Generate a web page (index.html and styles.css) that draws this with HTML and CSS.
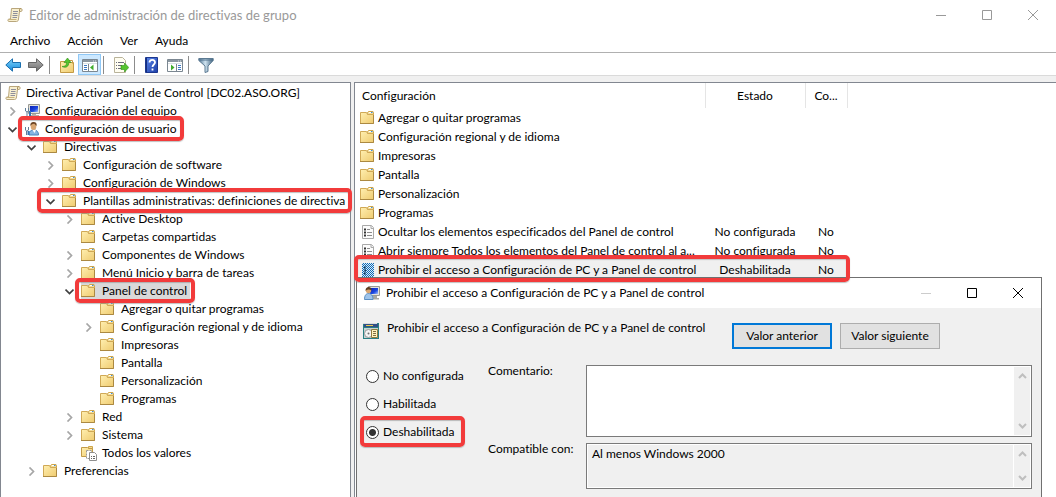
FILE: index.html
```html
<!DOCTYPE html>
<html lang="es">
<head>
    <meta charset="UTF-8">
    <meta name="viewport" content="width=device-width, initial-scale=1.0">
    <title>Editor de administración de directivas de grupo</title>
    <link rel="stylesheet" href="styles.css">
</head>
<body>

<!-- Shared icons -->
<svg class="sprite" aria-hidden="true">
    <defs>
        <linearGradient id="gFolder" x1="0" y1="0" x2="1" y2="1">
            <stop offset="0" stop-color="#ffefb0"/>
            <stop offset="1" stop-color="#efcb70"/>
        </linearGradient>
        <linearGradient id="gBlue" x1="0" y1="0" x2="0" y2="1">
            <stop offset="0" stop-color="#7fd4fb"/>
            <stop offset="1" stop-color="#1389dc"/>
        </linearGradient>
        <linearGradient id="gGray" x1="0" y1="0" x2="0" y2="1">
            <stop offset="0" stop-color="#b5b5b5"/>
            <stop offset="1" stop-color="#6e6e6e"/>
        </linearGradient>
        <linearGradient id="gHelp" x1="0" y1="0" x2="1" y2="1">
            <stop offset="0" stop-color="#5b86ea"/>
            <stop offset="1" stop-color="#1e3fa8"/>
        </linearGradient>
        <linearGradient id="gScreen" x1="0" y1="0" x2="1" y2="1">
            <stop offset="0" stop-color="#0a1fb4"/>
            <stop offset="0.6" stop-color="#1c48e0"/>
            <stop offset="1" stop-color="#a9c6ff"/>
        </linearGradient>
        <linearGradient id="gFunnel" x1="0" y1="0" x2="1" y2="0">
            <stop offset="0" stop-color="#4f7594"/>
            <stop offset="0.45" stop-color="#cfe3f0"/>
            <stop offset="1" stop-color="#3f627f"/>
        </linearGradient>
        <pattern id="dither" width="2" height="2" patternUnits="userSpaceOnUse">
            <rect width="1" height="1" fill="#0f6ab4"/>
            <rect x="1" y="1" width="1" height="1" fill="#0f6ab4"/>
        </pattern>
    </defs>
    <symbol id="folder" viewBox="1 0 16 16">
        <path d="M8.500 3.500V2.500L9.500 1.500H14L14.500 2.500V5H8.500z" fill="#f3dc98" stroke="#cfa64c"/>
        <path d="M10 2.500h3" stroke="#fff"/>
        <path d="M12 2.500h1.500" stroke="#3b8fe0"/>
        <path d="M1.500 2.500H7.500L8.500 4.500H14.500V13.500H1.500z" fill="url(#gFolder)" stroke="#d0a956"/>
        <path d="M14.500 5V13.500H1" fill="none" stroke="#ab8942"/>
    </symbol>
    <symbol id="scroll" viewBox="0 0 16 16">
        <path d="M4.500 1.500H14c1.500 0 1.500 3 0 3h-1.500L11.500 12c0 1.500-.8 2.500-2 2.500H2c-1.500 0-1.500-2.500 0-2.500h1.500z" fill="#f8efcf" stroke="#b9a67c"/>
        <path d="M12.500 4.500V3c0-1 .5-1.500 1.500-1.500" fill="#e6d5a6" stroke="#a58d58"/>
        <path d="M2 12.500h7.500" stroke="#c8b27c"/>
        <path d="M6 4.500h5M6 6.500h4.500M5.500 8.500h5M5.500 10.500h4.500" stroke="#8f8f9b"/>
    </symbol>
    <symbol id="computer" viewBox="0 0 16 16">
        <path d="M4.500 1.500h11v9h-11z" fill="#e3e3dc" stroke="#9a9a94"/>
        <path d="M6 3h8v6H6z" fill="url(#gScreen)"/>
        <path d="M8 11h4v2H8zM6 12h9v2H6z" fill="#b3b3ac"/>
        <path d="M1.500 5v3l1.500 1 1.500-1V5M3 9v5" fill="none" stroke="#5f7d98"/>
        <path d="M6 8v6" stroke="#3676b5" stroke-width="2"/>
    </symbol>
    <symbol id="user" viewBox="0 0 16 16">
        <path d="M5 14c0-4 2-5 5-5s4.500 2 4.500 5z" fill="#86b5e3" stroke="#4b83bb"/>
        <path d="M8.500 9l2 3 1.500-3z" fill="#fff"/>
        <ellipse cx="9.500" cy="5.500" rx="2.800" ry="3.500" fill="#d9a672"/>
        <path d="M6.500 5c-.5-3 1-4 3.200-4s3.500 1.500 2.800 4c-1-.5-1-1.500-2-2S7.500 3.500 6.500 5z" fill="#6d4524"/>
        <path d="M1.500 6v3l1 1v4M4.500 6v3l-1.500 1" fill="none" stroke="#5f7d98"/>
        <path d="M4.500 10v4" stroke="#3676b5" stroke-width="2"/>
    </symbol>
    <symbol id="userpc" viewBox="0 0 16 16">
        <path d="M4.500 1.500h11v9h-11z" fill="#e3e3dc" stroke="#9a9a94"/>
        <path d="M6 3h8v6H6z" fill="url(#gScreen)"/>
        <path d="M9 11h4v2H9zM8 13h7v1.500H8z" fill="#a8a8a2"/>
        <path d="M.5 14.500c0-4 1.500-6 4-6s4.500 2 4.500 6z" fill="#9fc4ea" stroke="#5a8fc4"/>
        <circle cx="4.500" cy="5.500" r="2.700" fill="#d9a672"/>
        <path d="M1.500 6c0-3 1.500-4 3-4s3.500 1 3 3.500C6 4 3 4 1.500 6z" fill="#5c3c20"/>
    </symbol>
    <symbol id="doc" viewBox="0 0 16 16">
        <path d="M2.500 1.500h9l2 2v11h-11z" fill="#fcfcfc" stroke="#a9a9a9"/>
        <path d="M11 1.500v3h3" fill="#eee" stroke="#a9a9a9"/>
        <path d="M4 5.500h2M4 8.500h2M4 11.500h2" stroke="#333" stroke-width="2"/>
        <path d="M7 5.500H10M7 8.500h5M7 11.500h5" stroke="#8c8c8c"/>
    </symbol>
    <symbol id="docSelected" viewBox="0 0 16 16">
        <path d="M2 1h10l2 2v12H2z" fill="#d9eafa"/>
        <path d="M4 5.500h2M4 8.500h2M4 11.500h2" stroke="#333" stroke-width="2"/>
        <path d="M2 1h12v14H2z" fill="url(#dither)"/>
    </symbol>
    <symbol id="allValues" viewBox="0 0 16 16">
        <path d="M7.500 3V1.500h4V5h-4z" fill="#f3dc98" stroke="#cfa64c"/>
        <path d="M.5 2.500h6l1 1H11.500v8H.5z" fill="url(#gFolder)" stroke="#c29b48"/>
        <path d="M5.500 5.500h5v8h-5z" fill="#fff" stroke="#999" stroke-dasharray="2 1"/>
        <path d="M8.500 7.500h5l2 2v6h-7z" fill="#fff" stroke="#8e8e8e"/>
        <path d="M10 11.500h1M12 11.500h2M10 13.500h1M12 13.500h2" stroke="#666"/>
    </symbol>
    <symbol id="policy" viewBox="0 0 16 16">
        <path d="M0 0h16v16H0z" fill="#287f84"/>
        <path d="M1 1h14v3H1z" fill="#314f86"/>
        <path d="M0 0h14v1H0z" fill="#dcdcdc"/>
        <path d="M3 2h7v1H3z" fill="#e8c94c"/>
        <path d="M1 5h14v10H1z" fill="#c8d3d3"/>
        <circle cx="5.500" cy="10.500" r="4" fill="#f4f4f4" stroke="#999"/>
        <circle cx="5.500" cy="10.500" r="1" fill="#6c6c6c"/>
        <path d="M8.500 6.500h6v8h-6z" fill="#fff3bf" stroke="#8f7b3c"/>
        <path d="M10 8.500h3M10 10.500h3M10 12.500h3" stroke="#7e6f42"/>
    </symbol>
    <symbol id="chevronRight" viewBox="0 0 9 9">
        <path d="M2.500 0.500L6.500 4.500L2.500 8.500" fill="none" stroke="#a6a6a6" stroke-width="1.700"/>
    </symbol>
    <symbol id="chevronDown" viewBox="0 0 9 9">
        <path d="M0.500 2.500L4.500 6.500L8.500 2.500" fill="none" stroke="#404040" stroke-width="1.700"/>
    </symbol>
    <symbol id="scrollUp" viewBox="0 0 9 9">
        <path d="M1 6L4.500 2.500L8 6" fill="none" stroke="#bfbfbf" stroke-width="2"/>
    </symbol>
    <symbol id="scrollDown" viewBox="0 0 9 9">
        <path d="M1 3L4.500 6.500L8 3" fill="none" stroke="#bfbfbf" stroke-width="2"/>
    </symbol>
    <symbol id="minimize" viewBox="0 0 10 10">
        <path d="M0 5.500h10" stroke="currentColor"/>
    </symbol>
    <symbol id="maximize" viewBox="0 0 10 10">
        <path d="M.5.5h9v9h-9z" fill="none" stroke="currentColor"/>
    </symbol>
    <symbol id="close" viewBox="0 0 10 10">
        <path d="M0 0l10 10M10 0L0 10" stroke="currentColor"/>
    </symbol>
</svg>

<div class="window">
    <header class="titlebar">
        <svg class="icon"><use href="#scroll"/></svg>
        <h1>Editor de administración de directivas de grupo</h1>
        <div class="window-controls">
            <button type="button" aria-label="Minimizar"><svg><use href="#minimize"/></svg></button>
            <button type="button" aria-label="Maximizar"><svg><use href="#maximize"/></svg></button>
            <button type="button" aria-label="Cerrar"><svg><use href="#close"/></svg></button>
        </div>
    </header>

    <nav class="menubar">
        <button type="button">Archivo</button>
        <button type="button">Acción</button>
        <button type="button">Ver</button>
        <button type="button">Ayuda</button>
    </nav>

    <div class="toolbar">
        <button type="button" aria-label="Atrás">
            <svg class="icon" viewBox="0 0 16 16"><path d="M.8 8L7.500 1.800V5.500H15.500V10.500H7.500V14.200z" fill="url(#gBlue)" stroke="#1b6fae"/></svg>
        </button>
        <button type="button" aria-label="Adelante">
            <svg class="icon" viewBox="0 0 16 16"><path d="M15.200 8L8.500 1.800V5.500H.5V10.500H8.500V14.200z" fill="url(#gGray)" stroke="#666"/></svg>
        </button>
        <span class="separator"></span>
        <button type="button" aria-label="Subir un nivel">
            <svg class="icon" viewBox="0 0 16 16">
                <path d="M1.500 4.500h5l1 1H14.500V15.500h-13z" fill="url(#gFolder)" stroke="#c39a45"/>
                <path d="M9.500 3.500h4v3" fill="none" stroke="#c39a45"/>
                <path d="M3 9.500c3 0 4.500-1 4.500-4H5L8.500 1l3.500 4.500H9.800C9.800 9.500 7 11.500 3 9.500z" fill="#55c42e" stroke="#2f8f17" stroke-width=".6"/>
            </svg>
        </button>
        <button type="button" class="active" aria-label="Mostrar árbol de consola">
            <svg class="icon" viewBox="0 0 16 16">
                <path d="M.5 2.500h15v12H.5z" fill="#fff" stroke="#7b8791"/>
                <path d="M1 3h14v2H1z" fill="#8a96a0"/>
                <path d="M11 4h1M13 4h1M1 6.500h14" stroke="#d9e0e5"/>
                <path d="M6.500 7v7" stroke="#7b8791"/>
                <path d="M2 8.500h3M2 10.500h3M2 12.500h3" stroke="#3c78c4"/>
                <path d="M11.500 7.500v6L8 10.500z" fill="#41ad2c"/>
            </svg>
        </button>
        <span class="separator"></span>
        <button type="button" aria-label="Exportar lista">
            <svg class="icon" viewBox="0 0 16 16">
                <path d="M1.500.5h8l3 3v12h-11z" fill="#fffdf0" stroke="#b9b39a"/>
                <path d="M3 5.500h1M3 8.500h1M3 11.500h1M5 5.500h6M5 8.500h4M5 11.500h4" stroke="#6d6d7d"/>
                <path d="M8 8.500h3.500V6L15.800 10.500 11.500 15v-2.500H8z" fill="#55c42e" stroke="#2f8f17" stroke-width=".6"/>
            </svg>
        </button>
        <span class="separator"></span>
        <button type="button" aria-label="Ayuda">
            <svg class="icon" viewBox="0 0 16 16">
                <path d="M1.500.5h12v15h-12z" fill="url(#gHelp)" stroke="#1c378f"/>
                <path d="M2.500 1v14" stroke="#16307f"/>
                <path d="M5.500 5.500c0-3.500 5.500-3.500 5.500 0 0 2-2.500 2-2.500 4.500M8.500 11.500v2" fill="none" stroke="#fff" stroke-width="1.800"/>
            </svg>
        </button>
        <button type="button" aria-label="Mostrar panel de acciones">
            <svg class="icon" viewBox="0 0 16 16">
                <path d="M.5 2.500h15v12H.5z" fill="#fff" stroke="#7b8791"/>
                <path d="M1 3h14v2H1z" fill="#8a96a0"/>
                <path d="M11 4h1M13 4h1M1 6.500h14" stroke="#d9e0e5"/>
                <path d="M9.500 7v7" stroke="#7b8791"/>
                <path d="M11 8.500h3M11 10.500h3M11 12.500h3" stroke="#3c78c4"/>
                <path d="M4 7.500v6L7.500 10.500z" fill="#41ad2c"/>
            </svg>
        </button>
        <span class="separator"></span>
        <button type="button" aria-label="Filtro">
            <svg class="icon" viewBox="0 0 16 16">
                <path d="M.8 1.500H15.200V3.500L10 9V14.500L7 15.500V9L.8 3.500z" fill="url(#gFunnel)" stroke="#5c7a92"/>
                <path d="M1.500 3h13" stroke="#4f708c"/>
            </svg>
        </button>
    </div>

    <main class="workspace">
        <section class="pane tree-pane">
            <div class="row root"><svg class="icon"><use href="#scroll"/></svg><span>Directiva Activar Panel de Control [DC02.ASO.ORG]</span></div>
            <ul class="tree">
                <li>
                    <div class="row"><button type="button" class="toggle" aria-label="Expandir"><svg><use href="#chevronRight"/></svg></button><span class="node"><svg class="icon"><use href="#computer"/></svg>Configuración del equipo</span></div>
                </li>
                <li>
                    <div class="row"><button type="button" class="toggle" aria-label="Contraer"><svg><use href="#chevronDown"/></svg></button><span class="node marked"><svg class="icon"><use href="#user"/></svg>Configuración de usuario</span></div>
                    <ul>
                        <li>
                            <div class="row"><button type="button" class="toggle" aria-label="Contraer"><svg><use href="#chevronDown"/></svg></button><span class="node"><svg class="icon"><use href="#folder"/></svg>Directivas</span></div>
                            <ul>
                                <li>
                                    <div class="row"><button type="button" class="toggle" aria-label="Expandir"><svg><use href="#chevronRight"/></svg></button><span class="node"><svg class="icon"><use href="#folder"/></svg>Configuración de software</span></div>
                                </li>
                                <li>
                                    <div class="row"><button type="button" class="toggle" aria-label="Expandir"><svg><use href="#chevronRight"/></svg></button><span class="node"><svg class="icon"><use href="#folder"/></svg>Configuración de Windows</span></div>
                                </li>
                                <li>
                                    <div class="row marked"><button type="button" class="toggle" aria-label="Contraer"><svg><use href="#chevronDown"/></svg></button><span class="node"><svg class="icon"><use href="#folder"/></svg>Plantillas administrativas: definiciones de directiva</span></div>
                                    <ul>
                                        <li>
                                            <div class="row"><button type="button" class="toggle" aria-label="Expandir"><svg><use href="#chevronRight"/></svg></button><span class="node"><svg class="icon"><use href="#folder"/></svg>Active Desktop</span></div>
                                        </li>
                                        <li>
                                            <div class="row"><span class="toggle"></span><span class="node"><svg class="icon"><use href="#folder"/></svg>Carpetas compartidas</span></div>
                                        </li>
                                        <li>
                                            <div class="row"><button type="button" class="toggle" aria-label="Expandir"><svg><use href="#chevronRight"/></svg></button><span class="node"><svg class="icon"><use href="#folder"/></svg>Componentes de Windows</span></div>
                                        </li>
                                        <li>
                                            <div class="row"><button type="button" class="toggle" aria-label="Expandir"><svg><use href="#chevronRight"/></svg></button><span class="node"><svg class="icon"><use href="#folder"/></svg>Menú Inicio y barra de tareas</span></div>
                                        </li>
                                        <li>
                                            <div class="row"><button type="button" class="toggle" aria-label="Contraer"><svg><use href="#chevronDown"/></svg></button><span class="node selected marked"><svg class="icon"><use href="#folder"/></svg>Panel de control</span></div>
                                            <ul>
                                                <li>
                                                    <div class="row"><span class="toggle"></span><span class="node"><svg class="icon"><use href="#folder"/></svg>Agregar o quitar programas</span></div>
                                                </li>
                                                <li>
                                                    <div class="row"><button type="button" class="toggle" aria-label="Expandir"><svg><use href="#chevronRight"/></svg></button><span class="node"><svg class="icon"><use href="#folder"/></svg>Configuración regional y de idioma</span></div>
                                                </li>
                                                <li>
                                                    <div class="row"><span class="toggle"></span><span class="node"><svg class="icon"><use href="#folder"/></svg>Impresoras</span></div>
                                                </li>
                                                <li>
                                                    <div class="row"><span class="toggle"></span><span class="node"><svg class="icon"><use href="#folder"/></svg>Pantalla</span></div>
                                                </li>
                                                <li>
                                                    <div class="row"><span class="toggle"></span><span class="node"><svg class="icon"><use href="#folder"/></svg>Personalización</span></div>
                                                </li>
                                                <li>
                                                    <div class="row"><span class="toggle"></span><span class="node"><svg class="icon"><use href="#folder"/></svg>Programas</span></div>
                                                </li>
                                            </ul>
                                        </li>
                                        <li>
                                            <div class="row"><button type="button" class="toggle" aria-label="Expandir"><svg><use href="#chevronRight"/></svg></button><span class="node"><svg class="icon"><use href="#folder"/></svg>Red</span></div>
                                        </li>
                                        <li>
                                            <div class="row"><button type="button" class="toggle" aria-label="Expandir"><svg><use href="#chevronRight"/></svg></button><span class="node"><svg class="icon"><use href="#folder"/></svg>Sistema</span></div>
                                        </li>
                                        <li>
                                            <div class="row"><span class="toggle"></span><span class="node"><svg class="icon"><use href="#allValues"/></svg>Todos los valores</span></div>
                                        </li>
                                    </ul>
                                </li>
                            </ul>
                        </li>
                        <li>
                            <div class="row"><button type="button" class="toggle" aria-label="Expandir"><svg><use href="#chevronRight"/></svg></button><span class="node"><svg class="icon"><use href="#folder"/></svg>Preferencias</span></div>
                        </li>
                    </ul>
                </li>
            </ul>
        </section>

        <section class="pane list-pane">
            <table class="settings">
                <colgroup>
                    <col class="col-name">
                    <col class="col-state">
                    <col class="col-comment">
                </colgroup>
                <thead>
                    <tr><th>Configuración</th><th>Estado</th><th>Co...</th></tr>
                </thead>
                <tbody>
                    <tr><td><svg class="icon"><use href="#folder"/></svg>Agregar o quitar programas</td><td></td><td></td></tr>
                    <tr><td><svg class="icon"><use href="#folder"/></svg>Configuración regional y de idioma</td><td></td><td></td></tr>
                    <tr><td><svg class="icon"><use href="#folder"/></svg>Impresoras</td><td></td><td></td></tr>
                    <tr><td><svg class="icon"><use href="#folder"/></svg>Pantalla</td><td></td><td></td></tr>
                    <tr><td><svg class="icon"><use href="#folder"/></svg>Personalización</td><td></td><td></td></tr>
                    <tr><td><svg class="icon"><use href="#folder"/></svg>Programas</td><td></td><td></td></tr>
                    <tr><td><svg class="icon"><use href="#doc"/></svg>Ocultar los elementos especificados del Panel de control</td><td>No configurada</td><td>No</td></tr>
                    <tr><td><svg class="icon"><use href="#doc"/></svg>Abrir siempre Todos los elementos del Panel de control al a...</td><td>No configurada</td><td>No</td></tr>
                    <tr class="current marked"><td><svg class="icon"><use href="#docSelected"/></svg>Prohibir el acceso a Configuración de PC y a Panel de control</td><td>Deshabilitada</td><td>No</td></tr>
                </tbody>
            </table>

            <!-- Policy dialog -->
            <div class="dialog" role="dialog" aria-labelledby="dialogTitle">
                <header class="titlebar">
                    <svg class="icon"><use href="#userpc"/></svg>
                    <h2 id="dialogTitle">Prohibir el acceso a Configuración de PC y a Panel de control</h2>
                    <div class="window-controls">
                        <button type="button" aria-label="Minimizar" disabled><svg><use href="#minimize"/></svg></button>
                        <button type="button" aria-label="Maximizar"><svg><use href="#maximize"/></svg></button>
                        <button type="button" aria-label="Cerrar"><svg><use href="#close"/></svg></button>
                    </div>
                </header>
                <form class="dialog-body">
                    <div class="dialog-head">
                        <svg class="icon"><use href="#policy"/></svg>
                        <p>Prohibir el acceso a Configuración de PC y a Panel de control</p>
                        <button type="button" class="btn btn-default">Valor anterior</button>
                        <button type="button" class="btn">Valor siguiente</button>
                    </div>
                    <div class="dialog-fields">
                        <div class="options">
                            <label><input type="radio" name="state">No configurada</label>
                            <label><input type="radio" name="state">Habilitada</label>
                            <label class="marked"><input type="radio" name="state" checked>Deshabilitada</label>
                        </div>
                        <div class="fields">
                            <label for="comment">Comentario:</label>
                            <div class="textbox">
                                <textarea id="comment" rows="4"></textarea>
                                <div class="scrollbar"><svg><use href="#scrollUp"/></svg><svg><use href="#scrollDown"/></svg></div>
                            </div>
                            <label for="supported">Compatible con:</label>
                            <div class="textbox readonly">
                                <textarea id="supported" rows="2" readonly>Al menos Windows 2000</textarea>
                                <div class="scrollbar"><svg><use href="#scrollUp"/></svg><svg><use href="#scrollDown"/></svg></div>
                            </div>
                        </div>
                    </div>
                </form>
            </div>
        </section>
    </main>
</div>

</body>
</html>
```
FILE: styles.css
```css
* {
    box-sizing: border-box;
}
body {
    margin: 0;
    font-family: Lato, "Open Sans", sans-serif;
    font-size: 12px;
    font-variant-ligatures: none;
    line-height: 18px;
    color: #000;
    background-color: #fff;
}
h1, h2, p, ul {
    margin: 0;
    padding: 0;
    font-size: 12px;
    font-weight: normal;
    list-style: none;
}
h1 {
    font-size: 13px;
}
button {
    margin: 0;
    padding: 0;
    border: none;
    background: none;
    color: inherit;
    font: inherit;
}
svg {
    display: block;
    flex: none;
}
.sprite {
    position: absolute;
    width: 0;
    height: 0;
}
.icon {
    width: 16px;
    height: 16px;
}
.window {
    display: flex;
    flex-direction: column;
    min-height: 100vh;
}

/* Title bars */
.titlebar {
    display: flex;
    align-items: center;
    gap: 6px;
    height: 30px;
    padding-left: 7px;
    background-color: #fff;
    color: #999;
}
.window-controls {
    display: flex;
    margin-left: auto;
}
.window-controls button {
    display: flex;
    justify-content: center;
    align-items: center;
    width: 46px;
    height: 28px;
}
.window-controls button:disabled {
    color: #ccc;
}
.window-controls svg {
    width: 10px;
    height: 10px;
}

/* Menu and toolbar */
.menubar {
    display: flex;
    gap: 17px;
    height: 23px;
    padding: 2px 10px;
    border-bottom: 1px solid #b0b0b0;
}
.toolbar {
    display: flex;
    align-items: center;
    height: 23px;
    padding: 1px 0 0 1px;
    border-bottom: 1px solid #dadada;
}
.toolbar button {
    display: flex;
    justify-content: center;
    align-items: center;
    width: 23px;
    height: 21px;
}
.toolbar .active {
    border: 1px solid #90c8f6;
    background-color: #cce8ff;
}
.separator {
    width: 1px;
    height: 18px;
    margin: 0 5px 0 2px;
    background-color: #8c8c8c;
}

/* Panes */
.workspace {
    display: grid;
    flex: 1;
    grid-template-columns: minmax(0, 1fr) minmax(0, 2fr);
    gap: 3px;
    padding-top: 6px;
    background-color: #f0f0f0;
}
.pane {
    position: relative;
    border: 1px solid #828790;
    border-bottom: none;
    background-color: #fff;
}
.tree-pane {
    padding: 1px 0 0 4px;
    white-space: nowrap;
}
.list-pane {
    border-right: none;
}

/* Tree */
.tree ul {
    padding-left: 19px;
}
.row {
    display: flex;
    align-items: center;
    height: 18px;
}
.root {
    gap: 5px;
}
.toggle {
    display: flex;
    align-items: center;
    width: 19px;
    height: 18px;
    padding-left: 3px;
}
.toggle svg {
    width: 9px;
    height: 9px;
}
.node {
    display: flex;
    align-items: center;
    gap: 5px;
    padding-right: 3px;
}
.selected {
    background-color: #d9d9d9;
}

/* Red highlight frames */
.marked {
    position: relative;
}
.marked::after {
    content: "";
    position: absolute;
    z-index: 2;
    inset: -4px -5px -3px -6px;
    border: 4px solid #f23b3b;
    border-radius: 5px;
    box-shadow: 0 1px 1px #8888, inset 0 1px 1px #8888;
    pointer-events: none;
}
.row.marked::after {
    right: -2px;
}

/* Settings list */
.settings {
    width: 492px;
    table-layout: fixed;
    border-collapse: collapse;
    white-space: nowrap;
}
.col-name {
    width: 350px;
}
.col-state {
    width: 100px;
}
.col-comment {
    width: 42px;
}
.settings th {
    height: 25px;
    padding: 0 7px;
    border-right: 1px solid #e5e5e5;
    font-weight: normal;
}
.settings th:first-child {
    text-align: left;
}
.settings td {
    height: 19px;
    padding: 0;
    text-align: center;
}
.settings td:first-child {
    display: flex;
    align-items: center;
    gap: 2px;
    padding-left: 5px;
}
.current {
    background-color: #f0f0f0;
}
.settings .marked::after {
    inset: -5px -3px -3px -1px;
}

/* Dialog */
.dialog {
    position: absolute;
    z-index: 1;
    top: 194px;
    right: 14px;
    bottom: 0;
    left: 1px;
    border: 1px solid #707070;
    border-bottom: none;
    background-color: #f0f0f0;
}
.dialog .titlebar {
    color: #000;
}
.dialog-body {
    padding: 15px 9px 8px 6px;
}
.dialog-head {
    display: flex;
    align-items: flex-start;
    gap: 8px;
    margin-bottom: 16px;
}
.dialog-head p {
    flex: 1;
    margin-top: -4px;
}
.btn {
    width: 100px;
    height: 26px;
    border: 1px solid #adadad;
    background-color: #e1e1e1;
}
.btn:last-child {
    margin-right: 92px;
}
.btn-default {
    border: 2px solid #0078d7;
}
.dialog-fields {
    display: flex;
}
.options {
    width: 125px;
    padding: 2px 3px;
}
.options label {
    display: flex;
    align-items: center;
    gap: 4px;
    width: 95px;
    height: 18px;
    margin-bottom: 10px;
    white-space: nowrap;
}
.options .marked::after {
    inset: -7px -4px -6px -6px;
}
input[type="radio"] {
    appearance: none;
    flex: none;
    width: 13px;
    height: 13px;
    margin: 0;
    border: 1px solid #333;
    border-radius: 50%;
    background-color: #fff;
}
input[type="radio"]:checked {
    background-image: radial-gradient(circle, #333 3px, #fff 4px);
}
.fields {
    display: grid;
    flex: 1;
    grid-template-columns: 98px 1fr;
    align-items: start;
    row-gap: 6px;
}
.fields label {
    margin-top: -3px;
}
.textbox {
    display: flex;
    padding: 1px;
    border: 1px solid #7a7a7a;
    background-color: #fff;
}
textarea {
    flex: 1;
    margin: 0;
    padding: 0 4px;
    border: none;
    outline: none;
    resize: none;
    overflow: hidden;
    background-color: #fff;
    font: inherit;
    line-height: 17px;
}
.readonly textarea {
    height: 42px;
    margin-right: 1px;
    background-color: #f0f0f0;
}
.scrollbar {
    display: flex;
    flex-direction: column;
    justify-content: space-between;
    align-items: center;
    width: 16px;
    padding: 5px 0;
    background-color: #f0f0f0;
}
.scrollbar svg {
    width: 9px;
    height: 9px;
}
```
